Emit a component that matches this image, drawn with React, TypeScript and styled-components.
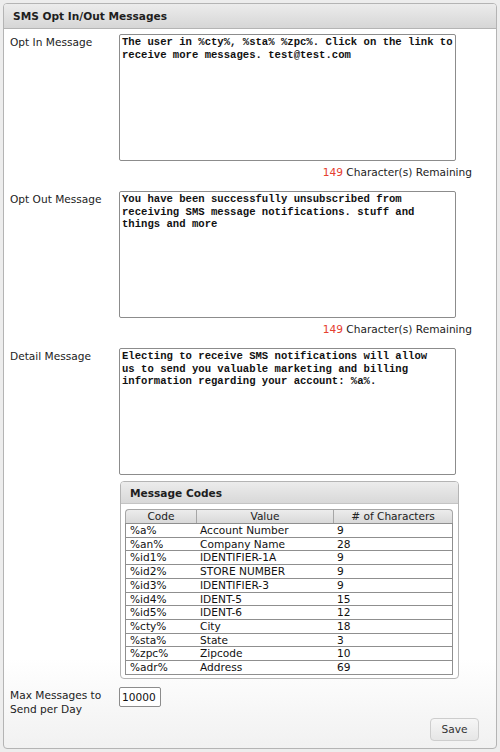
import React from "react";
import styled, { createGlobalStyle } from "styled-components";

const Global = createGlobalStyle`
  html, body {
    margin: 0;
    padding: 0;
    background: #ededed;
  }
  body {
    font-family: "DejaVu Sans", Verdana, sans-serif;
    font-size: 10.6px;
    color: #222;
  }
`;

const Panel = styled.section`
  margin: 3px;
  width: 492px;
  border: 1px solid #b4b4b4;
  border-radius: 4px;
  background: linear-gradient(to bottom, #ffffff 88%, #f1f1f1 100%);
  overflow: hidden;
`;

const PanelHeader = styled.h2`
  margin: 0;
  height: 24px;
  line-height: 24px;
  padding: 0 9px;
  font-size: 10.6px;
  font-weight: bold;
  color: #1e1e1e;
  background: linear-gradient(to bottom, #ececec, #d6d6d6);
  border-bottom: 1px solid #b4b4b4;
`;

const PanelBody = styled.div`
  padding: 5px 0 7px 6px;
  display: flex;
  flex-direction: column;
`;

const FieldRow = styled.div<{ $gap?: number }>`
  display: grid;
  grid-template-columns: 109px 1fr;
  margin-bottom: ${(p) => p.$gap ?? 0}px;
`;

const Label = styled.label`
  padding-top: 1px;
  line-height: 14px;
`;

const Field = styled.div`
  display: flex;
  flex-direction: column;
`;

const MessageBox = styled.textarea`
  box-sizing: border-box;
  width: 337px;
  height: 127px;
  margin: 0;
  padding: 1px 2px;
  border: 1px solid #8c8c8c;
  border-radius: 2px;
  resize: none;
  overflow: hidden;
  font-family: "Liberation Mono", "Courier New", monospace;
  font-size: 10.6px;
  font-weight: bold;
  line-height: 12.7px;
  color: #111;
  white-space: pre;
  background: #fff;
`;

const Remaining = styled.div`
  width: 353px;
  margin-top: 4px;
  text-align: right;
  line-height: 14px;
  color: #222;
`;

const Count = styled.span`
  color: #e5402f;
`;

const CodesPanel = styled.div`
  box-sizing: border-box;
  width: 339px;
  margin: 6px 0 0 1px;
  border: 1px solid #b4b4b4;
  border-radius: 4px;
  background: #fff;
  overflow: hidden;
`;

const CodesHeader = styled.h3`
  margin: 0;
  height: 21px;
  line-height: 22px;
  padding: 0 9px;
  font-size: 10.6px;
  font-weight: bold;
  color: #1e1e1e;
  background: linear-gradient(to bottom, #ececec, #d8d8d8);
  border-bottom: 1px solid #c4c4c4;
`;

const CodesBody = styled.div`
  padding: 5px 4px 3px 4px;
`;

const Table = styled.table`
  width: 328px;
  border-collapse: separate;
  border-spacing: 0;
  table-layout: fixed;
  font-size: 10.6px;
`;

const HeadCell = styled.th<{ $w: number }>`
  box-sizing: border-box;
  width: ${(p) => p.$w}px;
  height: 14px;
  padding: 0;
  font-weight: normal;
  line-height: 13px;
  text-align: center;
  color: #222;
  background: linear-gradient(to bottom, #ececec, #d9d9d9);
  border-top: 1px solid #a6a6a6;
  border-left: 1px solid #a6a6a6;
  &:first-child {
    border-top-left-radius: 4px;
  }
  &:last-child {
    border-right: 1px solid #a6a6a6;
    border-top-right-radius: 4px;
  }
`;

const Cell = styled.td`
  height: 12.7px;
  padding: 0 0 0 4px;
  line-height: 12.7px;
  color: #111;
  white-space: nowrap;
  border-top: 1px solid #8f8f8f;
  &:first-child {
    border-left: 1px solid #8f8f8f;
  }
  &:last-child {
    border-right: 1px solid #8f8f8f;
  }
`;

const LastRow = styled.tr`
  td {
    border-bottom: 1px solid #8f8f8f;
  }
`;

const NumberInput = styled.input`
  box-sizing: border-box;
  width: 42px;
  height: 20px;
  margin: 0;
  padding: 0 2px;
  border: 1px solid #8c8c8c;
  border-radius: 2px;
  font-family: "DejaVu Sans", Verdana, sans-serif;
  font-size: 10.6px;
  color: #111;
  background: #fff;
`;

const Footer = styled.div`
  display: flex;
  justify-content: flex-end;
  padding: 2px 17px 0 0;
`;

const SaveButton = styled.button`
  box-sizing: border-box;
  width: 49px;
  height: 23px;
  padding: 0;
  border: 1px solid #cdcdcd;
  border-radius: 4px;
  font-family: "DejaVu Sans", Verdana, sans-serif;
  font-size: 10.6px;
  color: #333;
  background: linear-gradient(to bottom, #f6f6f6, #e6e6e6);
`;

const optIn =
  "The user in %cty%, %sta% %zpc%. Click on the link to\nreceive more messages. test@test.com";
const optOut =
  "You have been successfully unsubscribed from\nreceiving SMS message notifications. stuff and\nthings and more";
const detail =
  "Electing to receive SMS notifications will allow\nus to send you valuable marketing and billing\ninformation regarding your account: %a%.";

const codes: [string, string, number][] = [
  ["%a%", "Account Number", 9],
  ["%an%", "Company Name", 28],
  ["%id1%", "IDENTIFIER-1A", 9],
  ["%id2%", "STORE NUMBER", 9],
  ["%id3%", "IDENTIFIER-3", 9],
  ["%id4%", "IDENT-5", 15],
  ["%id5%", "IDENT-6", 12],
  ["%cty%", "City", 18],
  ["%sta%", "State", 3],
  ["%zpc%", "Zipcode", 10],
  ["%adr%", "Address", 69],
];

function MessageCodes() {
  return (
    <CodesPanel>
      <CodesHeader>Message Codes</CodesHeader>
      <CodesBody>
        <Table>
          <thead>
            <tr>
              <HeadCell $w={71}>Code</HeadCell>
              <HeadCell $w={137}>Value</HeadCell>
              <HeadCell $w={120}># of Characters</HeadCell>
            </tr>
          </thead>
          <tbody>
            {codes.map(([code, value, n], i) => {
              const Row = i === codes.length - 1 ? LastRow : "tr";
              return (
                <Row key={code}>
                  <Cell>{code}</Cell>
                  <Cell>{value}</Cell>
                  <Cell>{n}</Cell>
                </Row>
              );
            })}
          </tbody>
        </Table>
      </CodesBody>
    </CodesPanel>
  );
}

export default function App() {
  return (
    <>
      <Global />
      <Panel>
        <PanelHeader>SMS Opt In/Out Messages</PanelHeader>
        <PanelBody>
          <FieldRow $gap={12}>
            <Label>Opt In Message</Label>
            <Field>
              <MessageBox defaultValue={optIn} spellCheck={false} />
              <Remaining>
                <Count>149</Count> Character(s) Remaining
              </Remaining>
            </Field>
          </FieldRow>
          <FieldRow $gap={12}>
            <Label>Opt Out Message</Label>
            <Field>
              <MessageBox defaultValue={optOut} spellCheck={false} />
              <Remaining>
                <Count>149</Count> Character(s) Remaining
              </Remaining>
            </Field>
          </FieldRow>
          <FieldRow $gap={8}>
            <Label>Detail Message</Label>
            <Field>
              <MessageBox defaultValue={detail} spellCheck={false} />
              <MessageCodes />
            </Field>
          </FieldRow>
          <FieldRow>
            <Label>
              Max Messages to
              <br />
              Send per Day
            </Label>
            <Field>
              <NumberInput defaultValue="10000" />
            </Field>
          </FieldRow>
          <Footer>
            <SaveButton>Save</SaveButton>
          </Footer>
        </PanelBody>
      </Panel>
    </>
  );
}
